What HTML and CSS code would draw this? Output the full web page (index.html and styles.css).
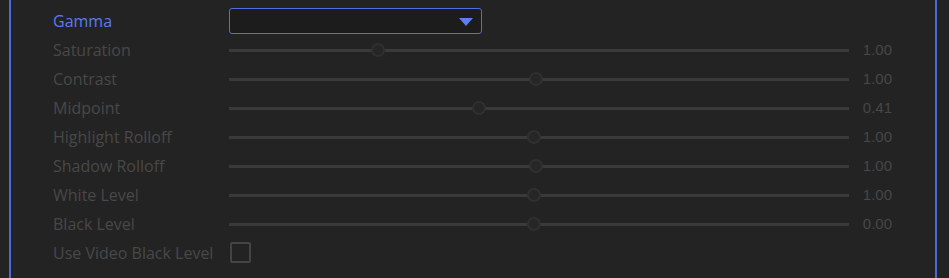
FILE: index.html
```html
<!DOCTYPE html>
<html lang="en">
<head>
  <meta charset="UTF-8" />
  <title>Color Settings</title>
  <link rel="stylesheet" href="styles.css">
</head>
<body>
  <div class="panel">
    <div class="row">
      <span class="label active">Gamma</span>
      <div class="select"><span class="arrow"></span></div>
    </div>

    <div class="row">
      <span class="label">Saturation</span>
      <div class="track"><span class="thumb" style="left: 24%"></span></div>
      <span class="value">1.00</span>
    </div>
    <div class="row">
      <span class="label">Contrast</span>
      <div class="track"><span class="thumb" style="left: 49.5%"></span></div>
      <span class="value">1.00</span>
    </div>
    <div class="row">
      <span class="label">Midpoint</span>
      <div class="track"><span class="thumb" style="left: 40.3%"></span></div>
      <span class="value">0.41</span>
    </div>
    <div class="row">
      <span class="label">Highlight Rolloff</span>
      <div class="track"><span class="thumb" style="left: 49.2%"></span></div>
      <span class="value">1.00</span>
    </div>
    <div class="row">
      <span class="label">Shadow Rolloff</span>
      <div class="track"><span class="thumb" style="left: 49.5%"></span></div>
      <span class="value">1.00</span>
    </div>
    <div class="row">
      <span class="label">White Level</span>
      <div class="track"><span class="thumb" style="left: 49.2%"></span></div>
      <span class="value">1.00</span>
    </div>
    <div class="row">
      <span class="label">Black Level</span>
      <div class="track"><span class="thumb" style="left: 49.2%"></span></div>
      <span class="value">0.00</span>
    </div>
    <div class="row">
      <span class="label">Use Video Black Level</span>
      <span class="checkbox"></span>
    </div>
  </div>
</body>
</html>
```

FILE: styles.css
```css
html, body {
  margin: 0;
  padding: 0;
  background: #232323;
  height: 100%;
}

body {
  font-family: "Open Sans", sans-serif;
  overflow: hidden;
}

.panel {
  margin: 0 12px 0 9px;
  min-height: 100%;
  border-left: 2px solid #4d69d8;
  border-right: 2px solid #4d69d8;
  padding: 6px 0 0 42px;
  box-sizing: border-box;
}

.row {
  display: grid;
  grid-template-columns: 176px 620px 43px;
  align-items: center;
  height: 29px;
}

.label {
  font-size: 16px;
  color: #484848;
  white-space: nowrap;
}

.label.active {
  color: #5a7cf0;
}

.select {
  grid-column: 2;
  width: 253px;
  height: 26px;
  border: 1px solid #4f6fe0;
  border-radius: 3px;
  background: #1c1c1c;
  display: flex;
  align-items: center;
  justify-content: flex-end;
  padding-right: 8px;
  box-sizing: border-box;
}

.arrow {
  width: 0;
  height: 0;
  border-left: 7px solid transparent;
  border-right: 7px solid transparent;
  border-top: 8px solid #5b7ef0;
  margin-top: 3px;
}

.track {
  position: relative;
  height: 3px;
  margin-top: 1px;
  background: #3a3a3a;
}

.thumb {
  position: absolute;
  top: 50%;
  width: 10px;
  height: 10px;
  margin: -7px 0 0 -7px;
  border: 2px solid #303030;
  border-radius: 50%;
  background: #262626;
}

.value {
  font-family: "Liberation Sans", Arial, sans-serif;
  font-size: 15px;
  color: #474747;
  text-align: right;
}

.checkbox {
  width: 17px;
  height: 17px;
  border: 2px solid #444;
  border-radius: 2px;
  margin-left: 1px;
}
```
